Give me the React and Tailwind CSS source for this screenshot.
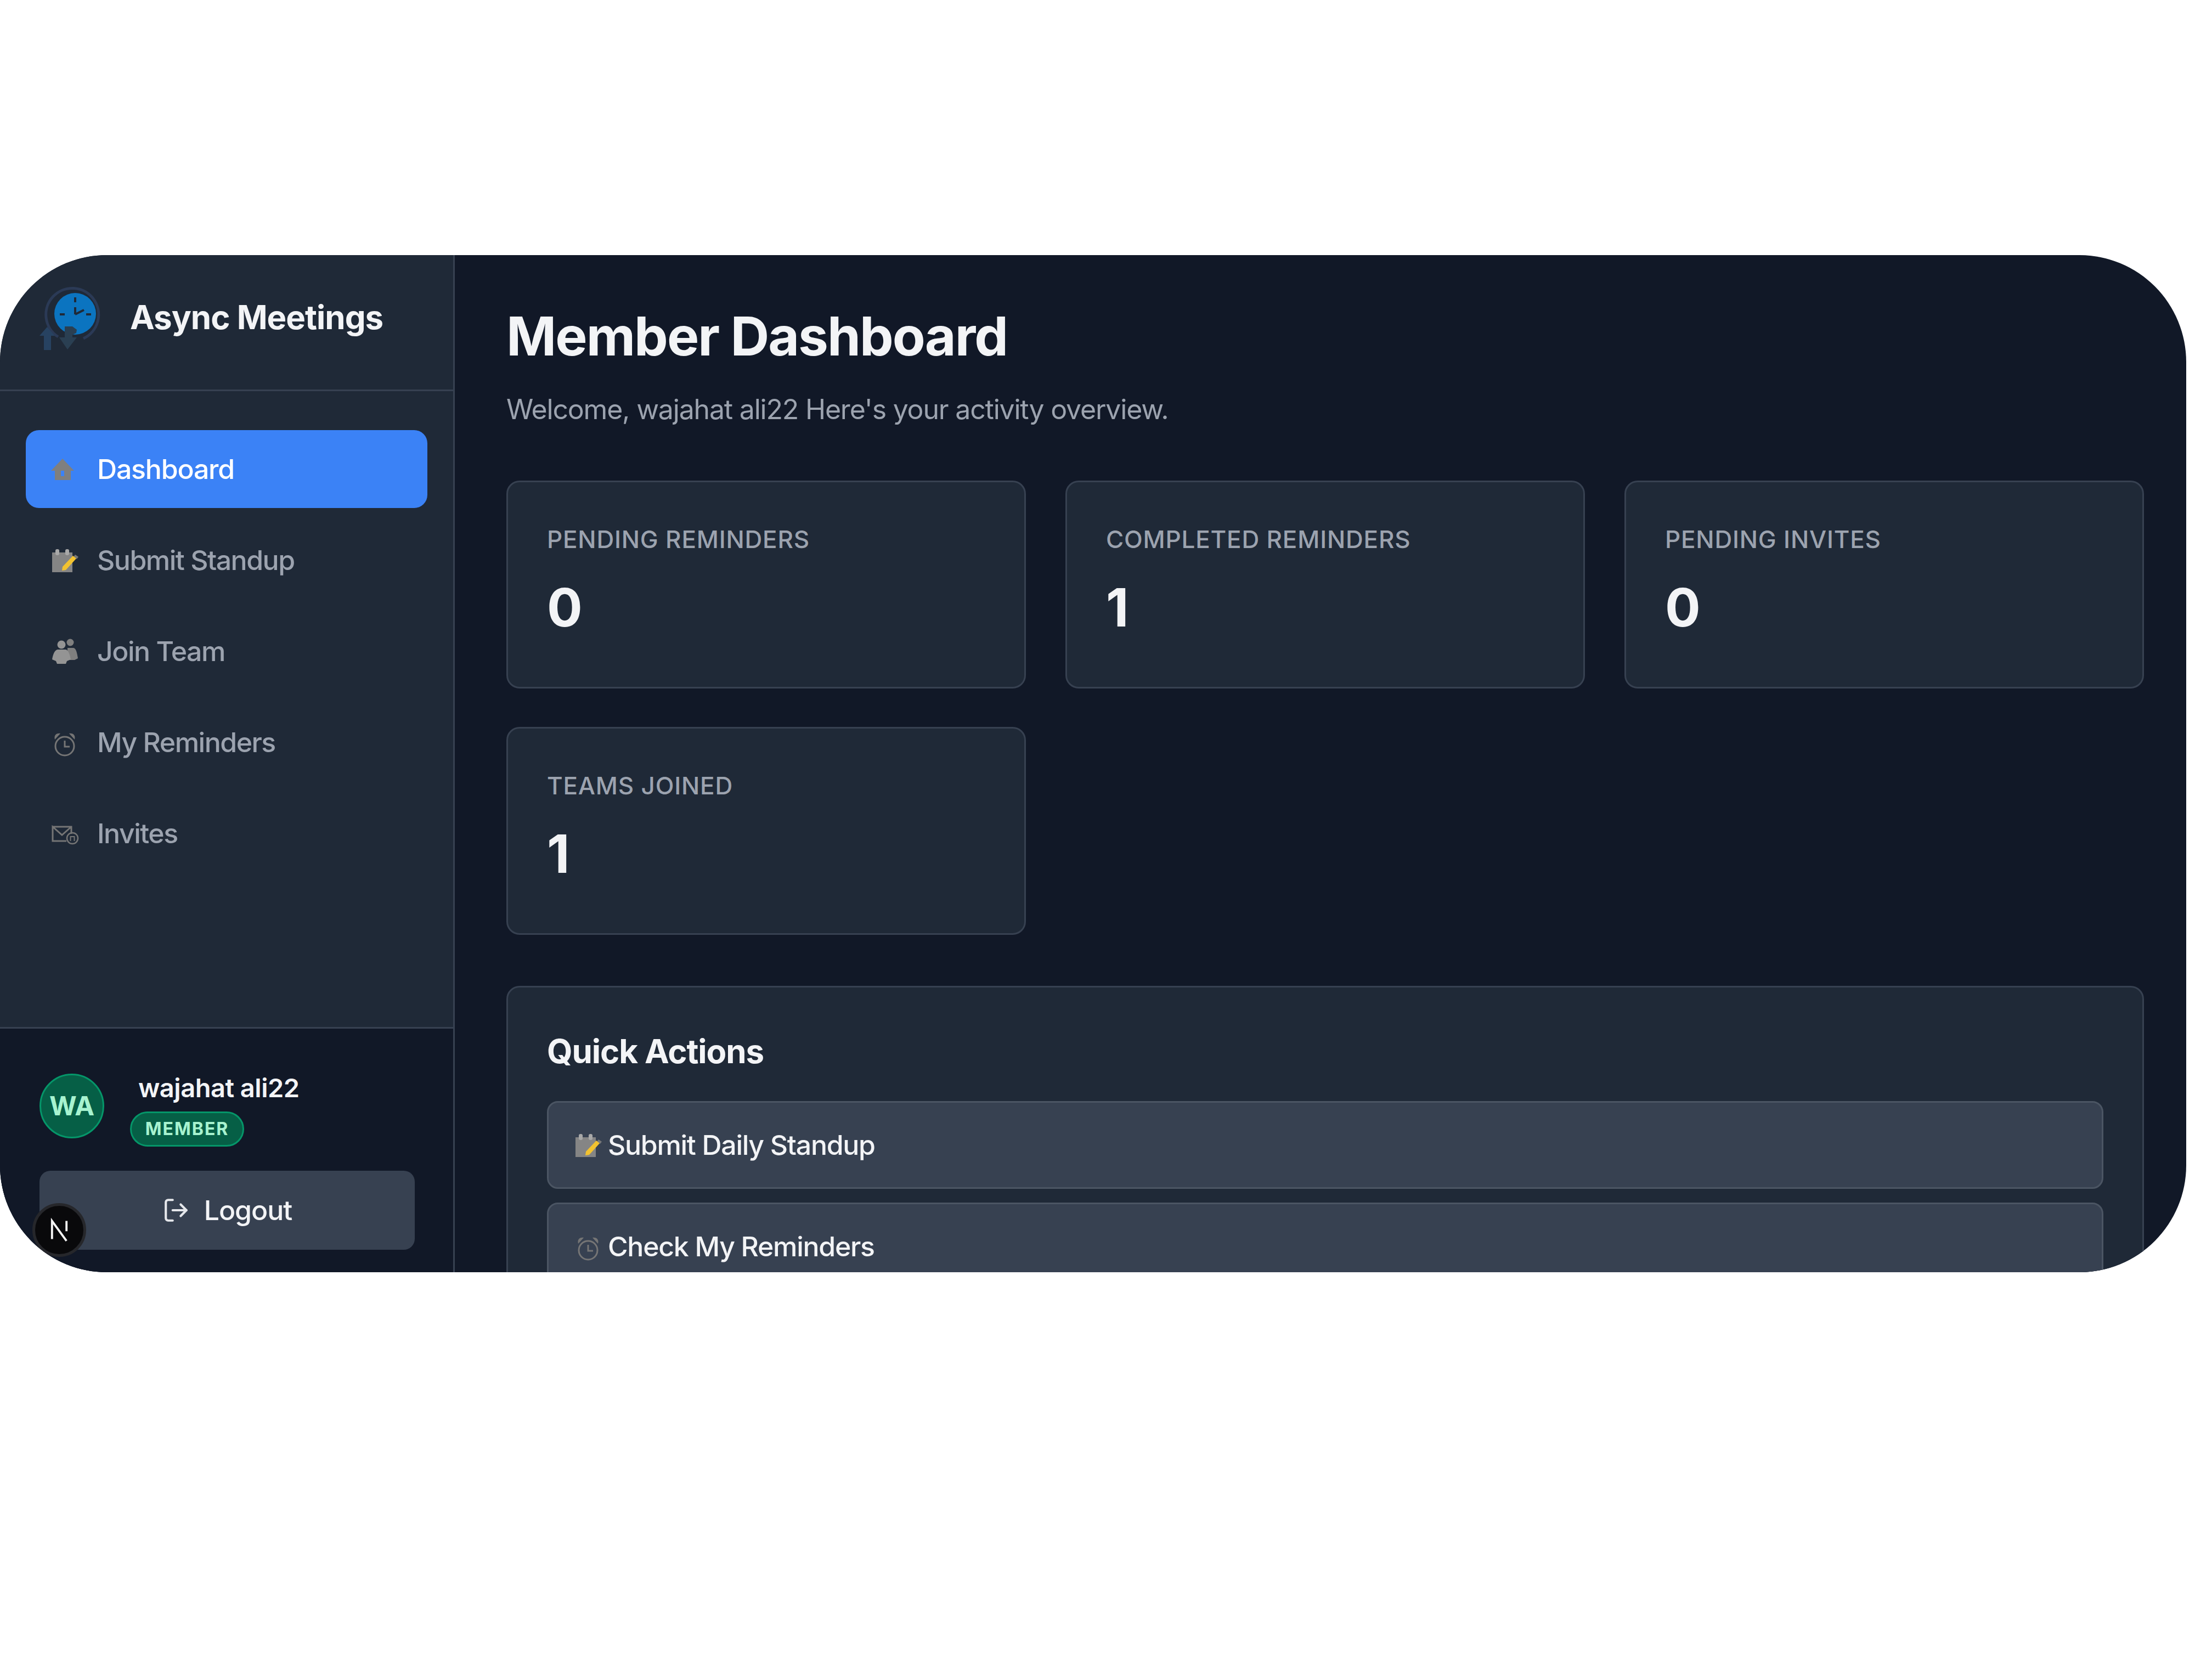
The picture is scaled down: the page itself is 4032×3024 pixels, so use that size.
import { LogOut } from "lucide-react";

const FONT = "font-['Inter','Liberation_Sans',sans-serif]";

function LogoIcon() {
  return (
    <svg viewBox="0 0 160 160" className="w-[160px] h-[160px] shrink-0">
      <path d="M46 114 A48 48 0 1 1 92 117" fill="none" stroke="#2b3a56" strokeWidth="5" />
      <circle cx="77" cy="72" r="38" fill="#0b74c0" />
      <path d="M77 42v9M49 73h9M97 73h9M77 73V60M77 73l16-8" stroke="#1f2937" strokeWidth="4" fill="none" />
      <path d="M58 95h14l8 6-1 6-7 3v5h8l-17 22-15-22h10z" fill="#2a3f52" />
      <path d="M12 112l14-16 14 16h-7v26H20v-26z" fill="#274261" />
    </svg>
  );
}

function HomeIcon() {
  return (
    <svg viewBox="0 0 45 45" className="w-[45px] h-[45px] shrink-0">
      <path fillRule="evenodd" d="M23 3l21 22h-6v17H9V25H2zM20 25v10h6V25z" fill="#7f7f7f" />
    </svg>
  );
}

function MemoIcon() {
  return (
    <svg viewBox="20 15 45 45" className="w-[45px] h-[45px] shrink-0 overflow-visible">
      <rect x="24" y="23" width="37" height="36" fill="#858585" />
      <rect x="30" y="17" width="7" height="11" rx="3" fill="#a8a8a8" />
      <rect x="48" y="17" width="7" height="11" rx="3" fill="#a8a8a8" />
      <path d="M66 27l6 4-3 4-6-4z" fill="#777" />
      <path d="M62 29l6 5-19 21-7 1 1-7z" fill="#f2c230" />
    </svg>
  );
}

function PeopleIcon() {
  return (
    <svg viewBox="20 15 45 45" className="w-[45px] h-[45px] shrink-0 overflow-visible">
      <circle cx="57" cy="21" r="6.5" fill="#7f7f7f" />
      <path d="M52 31h11c4 1 6 6 8 19l-6 3H52z" fill="#7f7f7f" />
      <circle cx="41" cy="25" r="7.5" fill="#949494" />
      <path d="M34 34h15c4 1 7 7 9 18l-7 3-2 5H33l-2-5-7-3c2-11 5-17 10-18z" fill="#949494" />
    </svg>
  );
}

function AlarmIcon() {
  return (
    <svg viewBox="20 15 45 45" className="w-[45px] h-[45px] shrink-0 overflow-visible">
      <circle cx="47" cy="44" r="17" fill="none" stroke="#757575" strokeWidth="3" />
      <path d="M47 34v11h9" fill="none" stroke="#757575" strokeWidth="3" />
      <path d="M29 32c-2-7 2-12 10-11zM65 32c2-7-2-12-10-11z" fill="#757575" />
    </svg>
  );
}

function MailIcon() {
  return (
    <svg viewBox="20 15 45 45" className="w-[45px] h-[45px] shrink-0 overflow-visible">
      <path d="M25 25h34v13M50 51H25V25l17 15 17-15" fill="none" stroke="#757575" strokeWidth="3" />
      <circle cx="61" cy="46" r="10" fill="none" stroke="#757575" strokeWidth="2.5" />
      <path d="M57.500 51v-8h7v8" fill="none" stroke="#757575" strokeWidth="2" />
    </svg>
  );
}

function NavItem({ icon, label, active }) {
  return (
    <div
      className={`h-[142px] rounded-[24px] px-[44px] flex items-center gap-[41px] text-[50px] font-medium ${
        active ? "bg-[#3b82f6] text-white tracking-[-1.2px]" : "text-[#9ca3af] tracking-[-1.5px]"
      }`}
    >
      {icon}
      <span>{label}</span>
    </div>
  );
}

function StatCard({ label, value }) {
  return (
    <div className="h-[379px] rounded-[24px] border-[3px] border-[#374151] bg-[#1f2937] px-[71px] pt-[72px]">
      <p className="text-[44px] leading-[64px] font-medium uppercase tracking-[0.8px] text-[#9ca3af]">{label}</p>
      <p className="mt-[32px] text-[96px] leading-[120px] font-bold text-[#f3f4f6]">{value}</p>
    </div>
  );
}

function ActionButton({ icon, label }) {
  return (
    <div className="h-[160px] shrink-0 rounded-[20px] border-[3px] border-[#4b5563] bg-[#374151] px-[45px] flex items-center gap-[18px] text-[50px] tracking-[-1.3px] font-medium text-[#f3f4f6]">
      {icon}
      <span>{label}</span>
    </div>
  );
}

export default function App() {
  return (
    <div className={`${FONT} w-[4032px] h-[3024px] bg-white pt-[465px]`}>
      <div className="relative w-[3985px] h-[1854px] rounded-[195px] overflow-hidden bg-[#111827] flex">
        <aside className="w-[829px] shrink-0 border-r-[3px] border-[#374151] bg-[#1f2937] flex flex-col">
          <div className="h-[248px] shrink-0 border-b-[3px] border-[#374151] flex items-start pl-[60px] pt-[35px] gap-[17px]">
            <LogoIcon />
            <span className="mt-[38px] text-[60px] leading-[80px] tracking-[-1px] font-bold text-[#f3f4f6]">Async Meetings</span>
          </div>
          <nav className="flex-1 px-[47px] pt-[71px] flex flex-col gap-[24px]">
            <NavItem active label="Dashboard" icon={<HomeIcon />} />
            <NavItem label="Submit Standup" icon={<MemoIcon />} />
            <NavItem label="Join Team" icon={<PeopleIcon />} />
            <NavItem label="My Reminders" icon={<AlarmIcon />} />
            <NavItem label="Invites" icon={<MailIcon />} />
          </nav>
          <div className="h-[447px] shrink-0 border-t-[3px] border-[#374151] bg-[#111827] px-[72px] pt-[82px]">
            <div className="flex gap-[47px]">
              <div className="w-[118px] h-[118px] shrink-0 rounded-full border-[3px] border-[#059669] bg-[#065f46] flex items-center justify-center text-[48px] font-bold text-[#a7f3d0]">
                WA
              </div>
              <div className="flex flex-col items-start -mt-[4px]">
                <span className="ml-[15px] text-[47px] leading-[60px] tracking-[-0.5px] font-semibold text-[#f3f4f6]">wajahat ali22</span>
                <span className="mt-[13px] h-[64px] w-[208px] rounded-full border-[3px] border-[#059669] bg-[#065f46] flex items-center justify-center text-[32px] font-bold tracking-[2px] text-[#a7f3d0]">
                  MEMBER
                </span>
              </div>
            </div>
            <div className="mt-[44px] h-[144px] w-[684px] rounded-[20px] bg-[#374151] flex items-center justify-center gap-[26px] text-[50px] tracking-[-1px] font-medium text-[#f3f4f6]">
              <LogOut size={50} strokeWidth={2} className="text-[#e5e7eb]" />
              <span>Logout</span>
            </div>
          </div>
        </aside>
        <main className="flex-1 min-w-0 pl-[94px] pr-[77px] pt-[90px]">
          <h1 className="text-[98px] leading-[116px] tracking-[-2px] font-bold text-[#f3f4f6]">Member Dashboard</h1>
          <p className="mt-[43px] text-[50px] leading-[64px] tracking-[-1.2px] text-[#9ca3af]">Welcome, wajahat ali22 Here's your activity overview.</p>
          <div className="mt-[98px] grid grid-cols-3 gap-x-[72px] gap-y-[70px]">
            <StatCard label="Pending Reminders" value="0" />
            <StatCard label="Completed Reminders" value="1" />
            <StatCard label="Pending Invites" value="0" />
            <StatCard label="Teams Joined" value="1" />
          </div>
          <section className="mt-[93px] rounded-[24px] border-[3px] border-[#374151] bg-[#1f2937] px-[71px] pt-[80px] h-[700px] flex flex-col">
            <h2 className="text-[60px] leading-[72px] tracking-[-1.1px] font-bold text-[#f3f4f6]">Quick Actions</h2>
            <div className="mt-[55px] flex flex-col gap-[25px]">
              <ActionButton label="Submit Daily Standup" icon={<MemoIcon />} />
              <ActionButton label="Check My Reminders" icon={<AlarmIcon />} />
            </div>
          </section>
        </main>
        <div className="absolute left-[59px] top-[1728px] w-[98px] h-[98px] rounded-full border-[5px] border-[#26272b] bg-[#09090b] flex items-center justify-center">
          <svg viewBox="0 0 40 40" className="w-[44px] h-[44px]">
            <path d="M8 35V5L32 38M32 5v17" fill="none" stroke="#f5f5f5" strokeWidth="3.5" />
          </svg>
        </div>
      </div>
    </div>
  );
}
